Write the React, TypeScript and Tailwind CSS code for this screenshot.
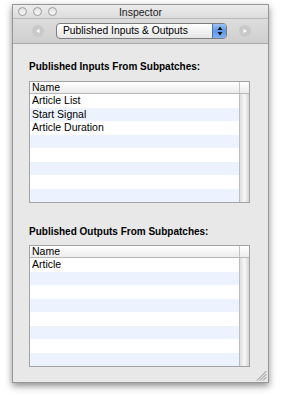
import React from 'react';

const font = { fontFamily: '"Liberation Sans", Arial, sans-serif' };

const Table: React.FC<{ items: string[] }> = ({ items }) => {
  const rows = Array.from({ length: 8 }, (_, i) => items[i] ?? '');
  return (
    <div className="w-[221px] border border-[#a3a3a3] bg-white">
      <div className="flex h-[12px] border-b border-[#b8b8b8] bg-gradient-to-b from-white to-[#ececec]">
        <div className="flex-1 pl-[2px] text-[10.5px] leading-[11px] text-black">Name</div>
        <div className="w-[10px] border-l border-[#c4c4c4]" />
      </div>
      <div className="flex">
        <div className="flex-1">
          {rows.map((r, i) => (
            <div
              key={i}
              className={`h-[13.5px] pl-[2px] text-[10.5px] leading-[13.5px] text-black ${i % 2 === 1 ? 'bg-[#edf3fe]' : 'bg-white'}`}
            >
              {r}
            </div>
          ))}
        </div>
        <div className="w-[10px] border-l border-[#bdbdbd] bg-gradient-to-r from-[#dedede] via-[#f7f7f7] to-[#d6d6d6]" />
      </div>
    </div>
  );
};

const NavButton: React.FC<{ dir: 'left' | 'right' }> = ({ dir }) => (
  <div className="flex h-[12px] w-[12px] items-center justify-center rounded-full bg-[#c9c9c9]">
    <svg width="6" height="6" viewBox="0 0 6 6">
      {dir === 'left' ? <polygon points="4.5,0.8 4.5,5.2 1.2,3" fill="#fff" /> : <polygon points="1.5,0.8 1.5,5.2 4.8,3" fill="#fff" />}
    </svg>
  </div>
);

export default function App() {
  return (
    <div className="h-[397px] w-[283px] bg-white pl-[12px] pt-[4px]" style={font}>
      <div className="flex h-[379px] w-[257px] flex-col border border-[#979797] bg-[#e8e8e8] shadow-[0_3px_7px_rgba(0,0,0,0.45)]">
        {/* title bar */}
        <div className="relative flex h-[14px] items-center border-b border-[#b9b9b9] bg-gradient-to-b from-[#ececec] to-[#dcdcdc]">
          <div className="flex gap-[6px] pl-[5px]">
            {[0, 1, 2].map((i) => (
              <div key={i} className="h-[9px] w-[9px] rounded-full border border-[#9c9c9c] bg-gradient-to-b from-[#e2e2e2] to-[#f6f6f6]" />
            ))}
          </div>
          <div className="absolute inset-0 text-center text-[10.5px] leading-[14px] text-[#1a1a1a]">Inspector</div>
        </div>
        {/* toolbar */}
        <div className="flex h-[25px] items-center border-b border-[#a9a9a9] bg-gradient-to-b from-[#dddddd] to-[#cfcfcf] pl-[19px] pr-[17px]">
          <NavButton dir="left" />
          <div className="ml-[12px] flex h-[16px] w-[171px] overflow-hidden rounded-[4px] border border-[#7d7d7d] bg-gradient-to-b from-white to-[#e6e6e6]">
            <div className="flex-1 pl-[6px] text-[10.3px] leading-[14px] text-black">Published Inputs &amp; Outputs</div>
            <div className="flex w-[14px] flex-col items-center justify-center border-l border-[#4a73b0] bg-gradient-to-b from-[#9cc2f2] via-[#5d98e6] to-[#7fb1ef]">
              <svg width="6" height="10" viewBox="0 0 6 10">
                <polygon points="3,0.5 5.5,4 0.5,4" fill="#111" />
                <polygon points="3,9.5 5.5,6 0.5,6" fill="#111" />
              </svg>
            </div>
          </div>
          <div className="flex-1" />
          <NavButton dir="right" />
        </div>
        {/* content */}
        <div className="relative flex flex-1 flex-col px-[16px] pt-[17px]">
          <div className="h-[12px] text-[10px] font-bold leading-[12px] text-black">Published Inputs From Subpatches:</div>
          <div className="mt-[8px]">
            <Table items={['Article List', 'Start Signal', 'Article Duration']} />
          </div>
          <div className="mt-[23px] h-[12px] text-[10px] font-bold leading-[12px] text-black">Published Outputs From Subpatches:</div>
          <div className="mt-[7px]">
            <Table items={['Article']} />
          </div>
          <svg className="absolute bottom-[1px] right-[1px]" width="11" height="11" viewBox="0 0 11 11">
            <line x1="10.5" y1="1" x2="1" y2="10.5" stroke="#8a8a8a" strokeWidth="1" />
            <line x1="10.5" y1="4" x2="4" y2="10.5" stroke="#8a8a8a" strokeWidth="1" />
            <line x1="10.5" y1="7" x2="7" y2="10.5" stroke="#8a8a8a" strokeWidth="1" />
          </svg>
        </div>
      </div>
    </div>
  );
}
